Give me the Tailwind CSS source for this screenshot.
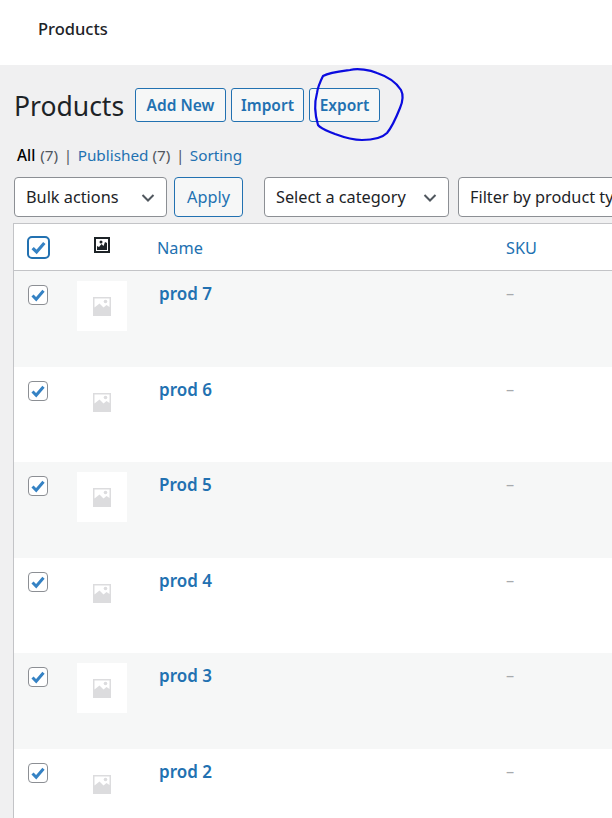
<!DOCTYPE html>
<html lang="en">
<head>
    <meta charset="UTF-8">
    <meta name="viewport" content="width=device-width, initial-scale=1.0">
    <title>Products</title>
    <script src="https://cdn.jsdelivr.net/npm/@tailwindcss/browser@4"></script>
</head>
<body class="relative h-[818px] w-[612px] overflow-hidden bg-[#f0f0f1] font-['Noto_Sans',sans-serif] text-[#1d2327]">
    <!-- Top bar -->
    <header class="flex h-[65px] items-start bg-white pl-[38px] pt-[17px] text-[16.5px] leading-[24px] font-medium">Products</header>

    <!-- Title and actions -->
    <div class="flex h-[57px] items-start pl-[14px] pt-[23px]">
        <h1 class="w-[121px] text-[26.5px] leading-[36px]">Products</h1>
        <a class="flex h-[34px] w-[91px] items-center justify-center rounded-[3px] border border-[#2271b1] bg-[#f6f7f7] pt-[2px] text-[15.5px] font-semibold text-[#2271b1]">Add New</a>
        <a class="ml-[5px] flex h-[34px] w-[73px] items-center justify-center rounded-[3px] border border-[#2271b1] bg-[#f6f7f7] pt-[2px] text-[15.5px] font-semibold text-[#2271b1]">Import</a>
        <a class="ml-[5px] flex h-[34px] w-[71px] items-center justify-center rounded-[3px] border border-[#2271b1] bg-[#f6f7f7] pt-[2px] text-[15.5px] font-semibold text-[#2271b1]">Export</a>
    </div>

    <!-- Status links -->
    <nav class="flex h-[55px] items-start pl-[17px] pt-[22px] text-[15.3px] leading-[22px] text-[#50575e]">
        <span class="font-medium text-black">All</span>
        <span class="ml-[5px]">(7)</span>
        <span class="mx-[5.5px]">|</span>
        <a class="text-[#2271b1]">Published <span class="text-[#50575e]">(7)</span></a>
        <span class="mx-[5.5px]">|</span>
        <a class="text-[#2271b1]">Sorting</a>
    </nav>

    <!-- Filters -->
    <div class="flex h-[46px] items-start pl-[14px] text-[16.3px] whitespace-nowrap">
        <div class="flex h-[40px] w-[153px] shrink-0 items-center justify-between rounded-[4px] border border-[#8c8f94] bg-white pl-[11px] pr-[11px] pt-[1px]">
            Bulk actions
            <svg class="h-[10px] w-[14px] text-[#50575e]" viewBox="0 0 14 10" fill="none" stroke="currentColor" stroke-width="2"><path d="M1.500 2l5.500 5.500L12.500 2"/></svg>
        </div>
        <button class="ml-[7px] h-[40px] w-[69px] shrink-0 rounded-[4px] border border-[#2271b1] bg-[#f6f7f7] pt-[1px] text-[#2271b1]">Apply</button>
        <div class="ml-[21px] flex h-[40px] w-[185px] shrink-0 items-center justify-between rounded-[4px] border border-[#8c8f94] bg-white pl-[11px] pr-[11px] pt-[1px]">
            Select a category
            <svg class="h-[10px] w-[14px] text-[#50575e]" viewBox="0 0 14 10" fill="none" stroke="currentColor" stroke-width="2"><path d="M1.500 2l5.500 5.500L12.500 2"/></svg>
        </div>
        <div class="ml-[9px] flex h-[40px] w-[200px] shrink-0 items-center rounded-l-[4px] border border-[#8c8f94] bg-white pl-[11px] pt-[1px]">Filter by product type</div>
    </div>

    <!-- Product table -->
    <div class="ml-[13px] w-[620px] border-l border-t border-[#c3c4c7] bg-white text-[16.3px]">
        <div class="grid h-[47px] grid-cols-[63px_80px_349px_1fr] items-center border-b border-[#c3c4c7] text-[#2271b1]">
            <div class="pl-[13px]">
                <div class="flex h-[23px] w-[23px] items-center justify-center rounded-[5px] border-2 border-[#2271b1] bg-white">
                    <svg class="h-[17px] w-[17px]" viewBox="0 0 16 16" fill="none" stroke="#3582c4" stroke-width="3"><path d="M2.500 8.500l3.700 3.700 7.300-8.400"/></svg>
                </div>
            </div>
            <div class="mb-[4px] pl-[17px]">
                <svg class="h-[16px] w-[16px]" viewBox="0 0 16 16"><path fill="#1d2327" d="M0 0h16v16H0z"/><path fill="#fff" d="M2 2h12v12H2z"/><path fill="#1d2327" d="M3 13V9l2 1 2.500-3 2 2 1.500-4 2 1v7z"/><circle cx="7" cy="5" r="1.500" fill="#1d2327"/></svg>
            </div>
            <div class="pt-[3px]">Name</div>
            <div class="pt-[3px]">SKU</div>
        </div>

        <!-- prod 7 -->
        <div class="grid h-[96px] grid-cols-[63px_80px_349px_1fr] items-start bg-[#f6f7f7] pt-[10px]">
            <div class="pl-[14px] pt-[4px]">
                <div class="flex h-[20px] w-[20px] items-center justify-center rounded-[4px] border border-[#8c8f94] bg-white">
                    <svg class="h-[16px] w-[16px]" viewBox="0 0 16 16" fill="none" stroke="#3582c4" stroke-width="3"><path d="M2.500 8.500l3.700 3.700 7.300-8.400"/></svg>
                </div>
            </div>
            <div class="flex h-[50px] w-[50px] items-center justify-center bg-white">
                <svg class="h-[19px] w-[18px]" viewBox="0 0 18 19"><path fill="#dcdcde" d="M0 0h18v19H0z"/><path fill="#fff" d="M1.500 1.500h15v8.500l-3-2-3 2.500-4-4-5 4z"/><circle cx="12.500" cy="4.500" r="1.800" fill="#dcdcde"/></svg>
            </div>
            <a class="pl-[2px] text-[17px] leading-[26px] font-semibold text-[#2271b1]">prod 7</a>
            <div class="text-[#a7aaad]">–</div>
        </div>

        <!-- prod 6 -->
        <div class="grid h-[95px] grid-cols-[63px_80px_349px_1fr] items-start bg-white pt-[10px]">
            <div class="pl-[14px] pt-[4px]">
                <div class="flex h-[20px] w-[20px] items-center justify-center rounded-[4px] border border-[#8c8f94] bg-white">
                    <svg class="h-[16px] w-[16px]" viewBox="0 0 16 16" fill="none" stroke="#3582c4" stroke-width="3"><path d="M2.500 8.500l3.700 3.700 7.300-8.400"/></svg>
                </div>
            </div>
            <div class="flex h-[50px] w-[50px] items-center justify-center bg-white">
                <svg class="h-[19px] w-[18px]" viewBox="0 0 18 19"><path fill="#dcdcde" d="M0 0h18v19H0z"/><path fill="#fff" d="M1.500 1.500h15v8.500l-3-2-3 2.500-4-4-5 4z"/><circle cx="12.500" cy="4.500" r="1.800" fill="#dcdcde"/></svg>
            </div>
            <a class="pl-[2px] text-[17px] leading-[26px] font-semibold text-[#2271b1]">prod 6</a>
            <div class="text-[#a7aaad]">–</div>
        </div>

        <!-- Prod 5 -->
        <div class="grid h-[96px] grid-cols-[63px_80px_349px_1fr] items-start bg-[#f6f7f7] pt-[10px]">
            <div class="pl-[14px] pt-[4px]">
                <div class="flex h-[20px] w-[20px] items-center justify-center rounded-[4px] border border-[#8c8f94] bg-white">
                    <svg class="h-[16px] w-[16px]" viewBox="0 0 16 16" fill="none" stroke="#3582c4" stroke-width="3"><path d="M2.500 8.500l3.700 3.700 7.300-8.400"/></svg>
                </div>
            </div>
            <div class="flex h-[50px] w-[50px] items-center justify-center bg-white">
                <svg class="h-[19px] w-[18px]" viewBox="0 0 18 19"><path fill="#dcdcde" d="M0 0h18v19H0z"/><path fill="#fff" d="M1.500 1.500h15v8.500l-3-2-3 2.500-4-4-5 4z"/><circle cx="12.500" cy="4.500" r="1.800" fill="#dcdcde"/></svg>
            </div>
            <a class="pl-[2px] text-[17px] leading-[26px] font-semibold text-[#2271b1]">Prod 5</a>
            <div class="text-[#a7aaad]">–</div>
        </div>

        <!-- prod 4 -->
        <div class="grid h-[95px] grid-cols-[63px_80px_349px_1fr] items-start bg-white pt-[10px]">
            <div class="pl-[14px] pt-[4px]">
                <div class="flex h-[20px] w-[20px] items-center justify-center rounded-[4px] border border-[#8c8f94] bg-white">
                    <svg class="h-[16px] w-[16px]" viewBox="0 0 16 16" fill="none" stroke="#3582c4" stroke-width="3"><path d="M2.500 8.500l3.700 3.700 7.300-8.400"/></svg>
                </div>
            </div>
            <div class="flex h-[50px] w-[50px] items-center justify-center bg-white">
                <svg class="h-[19px] w-[18px]" viewBox="0 0 18 19"><path fill="#dcdcde" d="M0 0h18v19H0z"/><path fill="#fff" d="M1.500 1.500h15v8.500l-3-2-3 2.500-4-4-5 4z"/><circle cx="12.500" cy="4.500" r="1.800" fill="#dcdcde"/></svg>
            </div>
            <a class="pl-[2px] text-[17px] leading-[26px] font-semibold text-[#2271b1]">prod 4</a>
            <div class="text-[#a7aaad]">–</div>
        </div>

        <!-- prod 3 -->
        <div class="grid h-[96px] grid-cols-[63px_80px_349px_1fr] items-start bg-[#f6f7f7] pt-[10px]">
            <div class="pl-[14px] pt-[4px]">
                <div class="flex h-[20px] w-[20px] items-center justify-center rounded-[4px] border border-[#8c8f94] bg-white">
                    <svg class="h-[16px] w-[16px]" viewBox="0 0 16 16" fill="none" stroke="#3582c4" stroke-width="3"><path d="M2.500 8.500l3.700 3.700 7.300-8.400"/></svg>
                </div>
            </div>
            <div class="flex h-[50px] w-[50px] items-center justify-center bg-white">
                <svg class="h-[19px] w-[18px]" viewBox="0 0 18 19"><path fill="#dcdcde" d="M0 0h18v19H0z"/><path fill="#fff" d="M1.500 1.500h15v8.500l-3-2-3 2.500-4-4-5 4z"/><circle cx="12.500" cy="4.500" r="1.800" fill="#dcdcde"/></svg>
            </div>
            <a class="pl-[2px] text-[17px] leading-[26px] font-semibold text-[#2271b1]">prod 3</a>
            <div class="text-[#a7aaad]">–</div>
        </div>

        <!-- prod 2 -->
        <div class="grid h-[95px] grid-cols-[63px_80px_349px_1fr] items-start bg-white pt-[10px]">
            <div class="pl-[14px] pt-[4px]">
                <div class="flex h-[20px] w-[20px] items-center justify-center rounded-[4px] border border-[#8c8f94] bg-white">
                    <svg class="h-[16px] w-[16px]" viewBox="0 0 16 16" fill="none" stroke="#3582c4" stroke-width="3"><path d="M2.500 8.500l3.700 3.700 7.300-8.400"/></svg>
                </div>
            </div>
            <div class="flex h-[50px] w-[50px] items-center justify-center bg-white">
                <svg class="h-[19px] w-[18px]" viewBox="0 0 18 19"><path fill="#dcdcde" d="M0 0h18v19H0z"/><path fill="#fff" d="M1.500 1.500h15v8.500l-3-2-3 2.500-4-4-5 4z"/><circle cx="12.500" cy="4.500" r="1.800" fill="#dcdcde"/></svg>
            </div>
            <a class="pl-[2px] text-[17px] leading-[26px] font-semibold text-[#2271b1]">prod 2</a>
            <div class="text-[#a7aaad]">–</div>
        </div>
    </div>

    <!-- Hand-drawn annotation round Export -->
    <svg class="absolute left-0 top-0 h-[818px] w-[612px]" viewBox="0 0 612 818" fill="none" stroke="#0b0bdf" stroke-width="2.200" stroke-linecap="round" stroke-linejoin="round">
        <path d="M323 76C330 72 342 71 350 70C358 68 370 70 377 73C386 76 396 82 401 90C404 96 403 101 400 108C396 118 392 127 387 133C381 139 372 140 362 140C352 140 343 137 335 134C328 131 321 129 318 125C315 115 314 104 317 93C318 86 321 80 323 76Z"/>
    </svg>
</body>
</html>
